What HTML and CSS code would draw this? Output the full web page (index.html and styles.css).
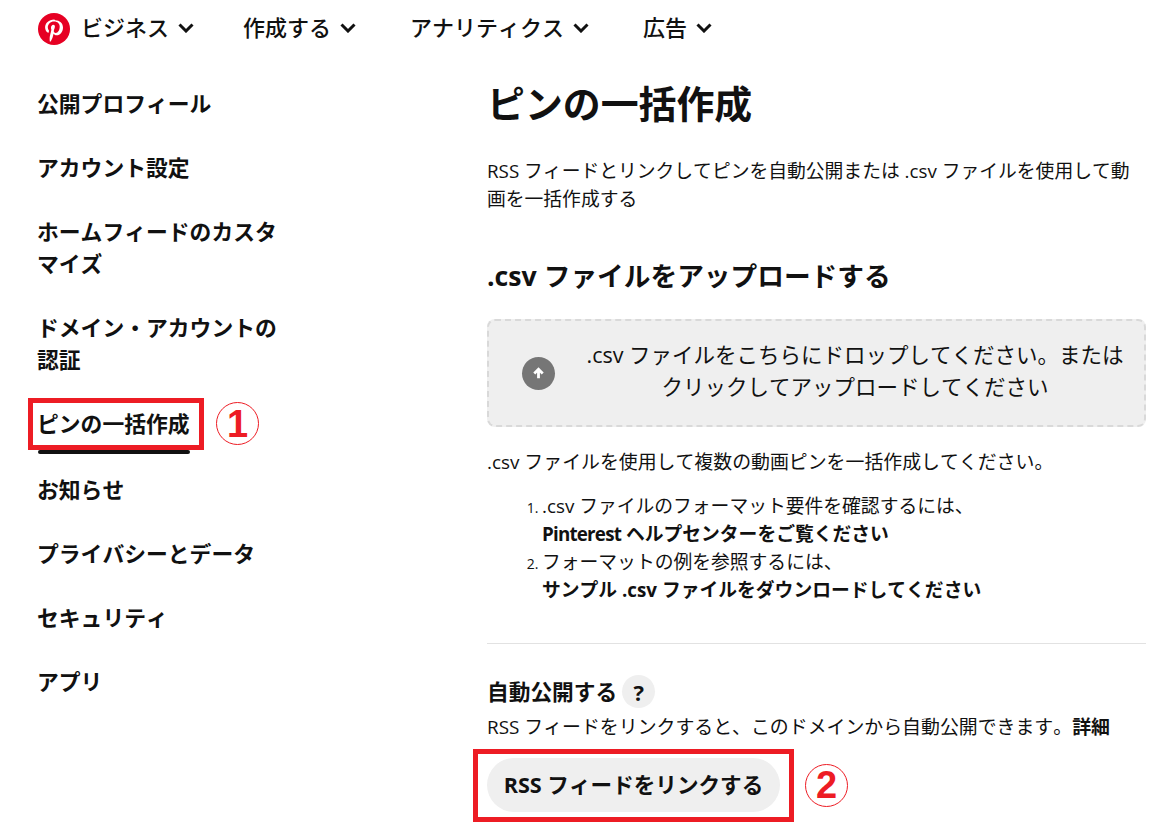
FILE: index.html
```html
<!DOCTYPE html>
<html lang="ja">
<head>
  <meta charset="UTF-8">
  <title>ピンの一括作成</title>
  <link rel="stylesheet" href="styles.css">
</head>
<body>

<header class="topbar">
  <svg class="logo" viewBox="0 0 32 32">
    <circle cx="16" cy="16" r="16" fill="#e60023"/>
    <path fill="#fff" d="M16.3 6.4c-5.6 0-9.2 3.7-9.2 8 0 2.1 1.2 4.6 3 5.4.3.1.4.1.5-.2l.4-1.6c0-.2 0-.3-.1-.5-.7-.8-1.1-2-1.1-3 0-3.300 2.500-6 6.300-6 3.500 0 5.600 2.200 5.600 5.100 0 3.700-1.700 6.400-4 6.400-1.300 0-2.200-1.100-1.900-2.300.4-1.500 1.100-3.100 1.100-4.200 0-1-.5-1.800-1.600-1.800-1.300 0-2.300 1.300-2.300 3.100 0 1.100.4 1.900.4 1.900l-1.500 6.400c-.3 1.200-.3 3.500-.1 5.300l.9.2c.9-1.500 1.700-3.400 2.100-4.800l.8-3c.4.800 1.600 1.500 2.900 1.500 3.800 0 6.500-3.500 6.500-7.800 0-4.100-3.400-7.200-7.800-7.200z"/>
  </svg>
  <a class="nav-item nav-first">ビジネス<svg class="chevron" viewBox="0 0 16 10"><path d="M1.500 1.500L8 8l6.500-6.500"/></svg></a>
  <a class="nav-item">作成する<svg class="chevron" viewBox="0 0 16 10"><path d="M1.500 1.500L8 8l6.500-6.500"/></svg></a>
  <a class="nav-item">アナリティクス<svg class="chevron" viewBox="0 0 16 10"><path d="M1.500 1.500L8 8l6.500-6.500"/></svg></a>
  <a class="nav-item">広告<svg class="chevron" viewBox="0 0 16 10"><path d="M1.500 1.500L8 8l6.500-6.500"/></svg></a>
</header>

<div class="layout">
  <nav class="sidebar">
    <a class="side-link">公開プロフィール</a>
    <a class="side-link">アカウント設定</a>
    <a class="side-link">ホームフィードのカスタマイズ</a>
    <a class="side-link">ドメイン・アカウントの認証</a>
    <a class="side-link active">
      ピンの一括作成
      <span class="mark mark-side"></span>
      <span class="step step-one">1</span>
    </a>
    <a class="side-link">お知らせ</a>
    <a class="side-link">プライバシーとデータ</a>
    <a class="side-link">セキュリティ</a>
    <a class="side-link">アプリ</a>
  </nav>

  <main class="content">
    <h1>ピンの一括作成</h1>
    <p class="intro">RSS フィードとリンクしてピンを自動公開または .csv ファイルを使用して動画を一括作成する</p>

    <h2>.csv ファイルをアップロードする</h2>
    <div class="dropzone">
      <span class="upload-icon">
        <svg viewBox="0 0 16 16"><path d="M8 13V4M3.500 8L8 3.500 12.500 8"/></svg>
      </span>
      <p>.csv ファイルをこちらにドロップしてください。またはクリックしてアップロードしてください</p>
    </div>

    <p class="lead">.csv ファイルを使用して複数の動画ピンを一括作成してください。</p>
    <ol class="steps">
      <li>.csv ファイルのフォーマット要件を確認するには、<br><a><span class="brand">Pinterest</span> ヘルプセンターをご覧ください</a></li>
      <li>フォーマットの例を参照するには、<br><a>サンプル .csv ファイルをダウンロードしてください</a></li>
    </ol>

    <hr>

    <div class="auto-title">
      <h3>自動公開する</h3>
      <span class="help">?</span>
    </div>
    <p class="auto-text">RSS フィードをリンクすると、このドメインから自動公開できます。<b>詳細</b></p>
    <div class="rss-wrap">
      <button>RSS フィードをリンクする</button>
      <span class="mark mark-rss"></span>
      <span class="step step-two">2</span>
    </div>
  </main>
</div>

</body>
</html>
```

FILE: styles.css
```css
* {
  box-sizing: border-box;
}

html, body {
  height: 837px;
  overflow: hidden;
}

body {
  margin: 0;
  background: #fff;
  color: #111;
  font-family: "Open Sans", "Noto Sans CJK JP", sans-serif;
  font-kerning: none;
}

.topbar {
  display: flex;
  align-items: center;
  height: 58px;
  padding-left: 38px;
}

.logo {
  width: 32px;
  height: 32px;
  margin-right: 11px;
}

.nav-item {
  display: flex;
  align-items: center;
  margin-right: 54px;
  margin-bottom: 6px;
  font-size: 22px;
  font-weight: 500;
}

.nav-first {
  margin-right: 49px;
}

.chevron {
  width: 16px;
  height: 10px;
  margin-left: 9px;
  margin-top: 4px;
}

.chevron path {
  fill: none;
  stroke: #111;
  stroke-width: 3;
}

.layout {
  display: flex;
}

.sidebar {
  display: flex;
  flex-direction: column;
  width: 487px;
  padding: 30px 0 0 37px;
}

.side-link {
  position: relative;
  align-self: flex-start;
  max-width: 240px;
  margin-bottom: 32px;
  font-size: 21.800px;
  font-weight: 700;
  line-height: 32px;
}

.side-link.active {
  margin-bottom: 34px;
}

.side-link.active::after {
  content: "";
  position: absolute;
  left: 1px;
  right: 0;
  bottom: -14px;
  height: 4px;
  border-radius: 2px;
  background: #111;
}

.mark {
  position: absolute;
  border: 5px solid #ed1c24;
}

.mark-side {
  left: -9px;
  top: -10px;
  width: 176px;
  height: 52px;
}

.step {
  position: absolute;
  display: flex;
  align-items: center;
  justify-content: center;
  width: 43px;
  height: 43px;
  border: 1.500px solid #ed1c24;
  border-radius: 50%;
  color: #ed1c24;
  font-family: "Liberation Sans", sans-serif;
  font-size: 38px;
  font-weight: 700;
}

.step-one {
  left: 179px;
  top: -6px;
}

.content {
  width: 659px;
}

h1 {
  margin: 18px 0 0;
  font-size: 37.900px;
  font-weight: 700;
  line-height: 54px;
}

.intro {
  margin: 27px 0 0;
  padding-right: 10px;
  font-size: 18.800px;
  line-height: 28px;
}

h2 {
  margin: 44px 0 0;
  font-size: 26.700px;
  font-weight: 700;
  line-height: 38px;
}

.dropzone {
  display: flex;
  align-items: center;
  height: 108px;
  margin-top: 24px;
  padding: 0 15px 0 33px;
  border: 2px dashed #d9d9d9;
  border-radius: 8px;
  background: #efefef;
}

.upload-icon {
  display: flex;
  flex-shrink: 0;
  align-items: center;
  justify-content: center;
  width: 33px;
  height: 33px;
  border-radius: 50%;
  background: #767676;
}

.upload-icon svg {
  width: 15px;
  height: 15px;
}

.upload-icon path {
  fill: none;
  stroke: #fff;
  stroke-width: 3;
}

.dropzone p {
  flex: 1;
  margin: 0 0 4px 26px;
  font-size: 21.500px;
  line-height: 32px;
  text-align: center;
}

.lead {
  margin: 21px 0 0;
  font-size: 18.900px;
  line-height: 28px;
}

.steps {
  margin: 16px 0 0;
  padding-left: 55px;
  font-size: 18.800px;
  line-height: 28px;
}

.steps li::marker {
  font-size: 14px;
}

.steps a {
  font-weight: 700;
}

.brand {
  letter-spacing: -0.800px;
}

hr {
  height: 1px;
  margin: 39px 0 0;
  border: 0;
  background: #e2e2e2;
}

.auto-title {
  display: flex;
  align-items: center;
  margin-top: 31px;
}

h3 {
  margin: 0;
  font-size: 21.700px;
  font-weight: 700;
  line-height: 32px;
}

.help {
  display: flex;
  align-items: center;
  justify-content: center;
  width: 33px;
  height: 33px;
  margin-left: 5px;
  border-radius: 50%;
  background: #efefef;
  font-size: 22px;
  font-weight: 700;
}

.auto-text {
  margin: 5px 0 0;
  font-size: 18.900px;
  line-height: 28px;
}

.rss-wrap {
  position: relative;
  margin-top: 17px;
  width: 293px;
}

button {
  display: block;
  width: 293px;
  height: 54px;
  padding-bottom: 5px;
  border: 0;
  border-radius: 27px;
  background: #efefef;
  color: #111;
  font-family: inherit;
  font-kerning: none;
  font-size: 21.600px;
  font-weight: 700;
}

.mark-rss {
  left: -14px;
  top: -9px;
  width: 321px;
  height: 73px;
}

.step-two {
  left: 318px;
  top: 6px;
}
```
